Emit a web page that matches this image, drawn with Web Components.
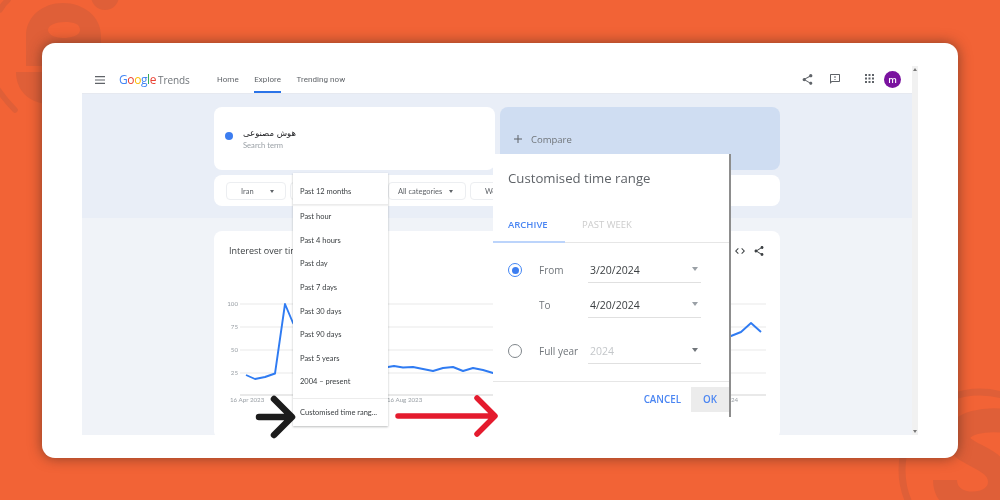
<!DOCTYPE html>
<html lang="en">
<head>
<meta charset="utf-8">
<title>Google Trends custom time range</title>
<style>
  html, body { margin: 0; background: #f26336; }
  body { font-family: "Open Sans", Roboto, sans-serif; }
</style>
</head>
<body>
<trends-shot>
  <trends-header slot="screen"></trends-header>
  <search-band slot="screen"></search-band>
  <chart-card slot="screen"></chart-card>
  <time-menu slot="over">
    <menu-item>Past hour</menu-item>
    <menu-item>Past 4 hours</menu-item>
    <menu-item>Past day</menu-item>
    <menu-item>Past 7 days</menu-item>
    <menu-item>Past 30 days</menu-item>
    <menu-item>Past 90 days</menu-item>
    <menu-item>Past 5 years</menu-item>
    <menu-item>2004 – present</menu-item>
  </time-menu>
  <range-dialog slot="over"></range-dialog>
</trends-shot>

<script>
// small helper so every element is written the same way
function shadow(el, html) {
  el.attachShadow({ mode: 'open' }).innerHTML = html;
}

const SHARE = 'M18 16.08c-.76 0-1.44.3-1.96.77L8.91 12.7c.05-.23.09-.46.09-.7s-.04-.47-.09-.7l7.05-4.11c.54.5 1.25.81 2.04.81 1.66 0 3-1.34 3-3s-1.34-3-3-3-3 1.34-3 3c0 .24.04.47.09.7L8.04 9.81C7.5 9.31 6.79 9 6 9c-1.66 0-3 1.34-3 3s1.34 3 3 3c.79 0 1.5-.31 2.04-.81l7.12 4.16c-.05.21-.08.43-.08.65 0 1.61 1.31 2.92 2.92 2.92 1.61 0 2.92-1.31 2.92-2.92s-1.31-2.92-2.92-2.92z';

class TrendsShot extends HTMLElement {
  constructor() {
    super();
    shadow(this, `
      <style>
        :host { display: block; position: relative; width: 1000px; height: 500px; overflow: hidden; background: #f26336; filter: blur(.3px); }
        .marks { position: absolute; left: 0; top: 0; }
        .frame { position: relative; box-sizing: border-box; width: 916px; height: 415px; margin: 43px 42px 0;
                 padding: 23px 40px 0; background: #fff; border-radius: 13px; box-shadow: 0 0 13px rgba(66,40,30,.62); }
        .screen { display: grid; grid-template-columns: 830px 6px; height: 369px; overflow: hidden; }
        .page { display: flex; flex-direction: column; height: 369px; overflow: hidden; background: #f0f3f8; }
        .bar { background: #f1f1f1; display: flex; flex-direction: column; justify-content: space-between; align-items: center; padding: 2px 0; box-sizing: border-box; }
        .bar i { width: 0; height: 0; border: 2px solid transparent; }
        .bar i:first-child { border-bottom: 3px solid #777; border-top: 0; }
        .bar i:last-child { border-top: 3px solid #777; border-bottom: 0; }
        .arrows { position: absolute; left: 0; top: 0; z-index: 5; pointer-events: none; }
      </style>
      <svg class="marks" width="1000" height="500" viewBox="0 0 1000 500" fill="#df5f38">
        <path fill-rule="evenodd" d="M26 36c0-20 17-33 37-33s38 13 38 33v30H26zM48 30c0 5 8 8 15 8s17-2 17-8-6-8-15-8-17 3-17 8z"/>
        <path d="M16 72h30v32C28 102 16 90 16 72z"/>
        <circle cx="105" cy="-4" r="14"/>
        <path d="M-3 88Q5 100 15 110M0 10Q3 4 8 0" fill="none" stroke="#df5f38" stroke-width="5.5" stroke-linecap="round"/>
        <circle cx="980" cy="470" r="78" fill="none" stroke="#df5f38" stroke-width="7"/>
        <path d="M1012 422C985 417 958 423 958 438 958 456 1000 456 1000 482 1000 510 945 512 945 480" fill="none" stroke="#df5f38" stroke-width="24"/>
      </svg>
      <div class="frame">
        <div class="screen">
          <div class="page"><slot name="screen"></slot></div>
          <div class="bar"><i></i><i></i></div>
        </div>
      </div>
      <slot name="over"></slot>
      <svg class="arrows" width="1000" height="500" viewBox="0 0 1000 500" fill="none" stroke-linecap="round" stroke-linejoin="round">
        <path d="M259 417H291M274 399L292 417 274 435" stroke="#1c1c1c" stroke-width="6.5"/>
        <path d="M398 416H494M477 398L495 416 477 434" stroke="#e41b2e" stroke-width="5.5"/>
      </svg>`);
  }
}

class TrendsHeader extends HTMLElement {
  constructor() {
    super();
    shadow(this, `
      <style>
        :host { display: flex; align-items: center; flex: none; height: 28px; padding-left: 13px; background: #fff; color: #5f6368;
                font: 8px Roboto, sans-serif; border-bottom: 1px solid #e6e9f0; box-sizing: border-box; }
        svg { display: block; flex: none; }
        .logo { display: flex; align-items: baseline; gap: 2px; margin-left: 14px; width: 84px; font: 500 12px "Open Sans", sans-serif; letter-spacing: -.4px; }
        .logo b { font-weight: 500; }
        .logo .name { font-size: 10px; font-weight: 400; letter-spacing: -.1px; color: #70757a; }
        nav { display: flex; height: 100%; gap: 15.5px; margin-left: 14px; }
        nav a { display: flex; align-items: center; color: #5f6368; letter-spacing: .05px; position: relative; }
        nav a.on::after { content: ""; position: absolute; left: 0; right: 0; bottom: 0; height: 2px; background: #2a73e8; }
        .right { display: flex; align-items: center; margin-left: auto; margin-right: 11px; }
        .avatar { width: 17px; height: 17px; border-radius: 50%; background: #7a139f; color: #fff; font: 600 9px "Open Sans", sans-serif;
                  display: flex; align-items: center; justify-content: center; margin-left: 10.5px; }
      </style>
      <svg width="10" height="8" viewBox="0 0 10 8" fill="#5f6368"><path d="M0 0h10v1.2H0zM0 3.4h10v1.2H0zM0 6.8h10V8H0z"/></svg>
      <div class="logo"><span><b style="color:#4285f4">G</b><b style="color:#ea4335">o</b><b style="color:#fbbc05">o</b><b style="color:#4285f4">g</b><b style="color:#34a853">l</b><b style="color:#ea4335">e</b></span><span class="name">Trends</span></div>
      <nav><a>Home</a><a class="on">Explore</a><a>Trending now</a></nav>
      <div class="right">
        <svg width="13" height="13" viewBox="0 0 24 24" fill="#5f6368"><path d="${SHARE}"/></svg>
        <svg style="margin-left:15px;margin-top:-2px" width="12" height="12" viewBox="0 0 24 24" fill="#5f6368"><path d="M20 2H4c-1.1 0-1.99.9-1.99 2L2 22l4-4h14c1.1 0 2-.9 2-2V4c0-1.1-.9-2-2-2zm0 14H5.17L4 17.17V4h16v12zM11 12h2v2h-2zm0-6h2v4h-2z"/></svg>
        <svg style="margin-left:24px;margin-top:-2px" width="9" height="9" viewBox="0 0 9 9" fill="#5f6368"><path d="M0 0h2v2H0zM3.5 0h2v2h-2zM7 0h2v2H7zM0 3.5h2v2H0zM3.5 3.5h2v2h-2zM7 3.5h2v2H7zM0 7h2v2H0zM3.5 7h2v2h-2zM7 7h2v2H7z"/></svg>
        <div class="avatar">m</div>
      </div>`);
  }
}

class FilterChip extends HTMLElement {
  constructor() {
    super();
    shadow(this, `
      <style>
        :host { display: flex; align-items: center; box-sizing: border-box; height: 18px; flex: none;
                border: 1px solid #eceef1; border-radius: 4px; color: #5f6368; font: 7.5px Lato, sans-serif; background: #fff; }
        i { width: 0; height: 0; border: 2.6px solid transparent; border-top: 3px solid #5f6368; border-bottom: 0; }
      </style>
      <slot></slot><i></i>`);
    this.style.width = this.getAttribute('w') + 'px';
    this.style.paddingLeft = this.getAttribute('pad') + 'px';
    this.style.gap = (this.getAttribute('gap') || 14) + 'px';
  }
}

class SearchBand extends HTMLElement {
  constructor() {
    super();
    shadow(this, `
      <style>
        :host { display: block; flex: none; height: 124px; box-sizing: border-box; padding: 13px 132px 12px 132px; background: #e9eef7; }
        .top { display: grid; grid-template-columns: 281px 280px; gap: 5px; height: 63px; }
        .term, .compare { border-radius: 8px; display: flex; align-items: center; box-sizing: border-box; }
        .term { background: #fff; padding-left: 11px; gap: 10px; }
        .dot { width: 8px; height: 8px; border-radius: 50%; background: #3c7df0; flex: none; margin-top: -6px; }
        .word { font: 8.5px "DejaVu Sans", "Noto Sans", sans-serif; color: #202124; line-height: 12px; }
        .sub { font: 7.6px Lato, sans-serif; color: #9aa0a6; line-height: 11px; margin-top: 1px; }
        .compare { background: #cfddf2; align-items: flex-end; padding: 0 0 24px 14px; gap: 9px; color: #70757a; font: 9.5px "Open Sans", sans-serif; }
        .filters { display: flex; align-items: center; gap: 4px; margin-top: 5px; height: 31px; padding: 1px 0 0 12px; box-sizing: border-box; background: #fff; border-radius: 8px; }
      </style>
      <div class="top">
        <div class="term"><span class="dot"></span><div><div class="word" dir="rtl" style="text-align:left">هوش مصنوعی</div><div class="sub">Search term</div></div></div>
        <div class="compare"><svg width="8" height="8" viewBox="0 0 8 8" fill="#5f6368" style="margin-bottom:3px"><path d="M3.5 0h1v3.5H8v1H4.5V8h-1V4.5H0v-1h3.5z"/></svg><span>Compare</span></div>
      </div>
      <div class="filters">
        <filter-chip w="60" pad="14" gap="16">Iran</filter-chip>
        <filter-chip w="94" pad="9"></filter-chip>
        <filter-chip w="78" pad="9" gap="7">All categories</filter-chip>
        <filter-chip w="84" pad="14">We</filter-chip>
      </div>`);
  }
}

class ChartCard extends HTMLElement {
  constructor() {
    super();
    shadow(this, `
      <style>
        :host { display: block; flex: none; height: 208px; margin: 13px 132px 0; background: #fff; border-radius: 8px; }
        .head { display: flex; align-items: center; height: 39px; margin-bottom: 1px; padding: 0 15px; box-sizing: border-box; color: #3c4043; font: 9px "Open Sans", sans-serif; }
        .head svg { display: block; }
        .tools { display: flex; gap: 7px; margin-left: auto; }
        .plot { display: block; }
        text { font: 6.2px Lato, sans-serif; fill: #9aa0a6; }
      </style>
      <div class="head"><span>Interest over time</span>
        <div class="tools">
          <svg width="12" height="12" viewBox="0 0 24 24" fill="#3c4043"><path d="M9.4 16.6 4.8 12l4.6-4.6L8 6l-6 6 6 6 1.4-1.4zm5.2 0 4.6-4.6-4.6-4.6L16 6l6 6-6 6-1.4-1.4z"/></svg>
          <svg width="12" height="12" viewBox="0 0 24 24" fill="#3c4043"><path d="${SHARE}"/></svg>
        </div>
      </div>
      <svg class="plot" width="566" height="164" viewBox="214 271 566 164">
        <g stroke="#f1f1f1" stroke-width="1.5">
          <path d="M240 304H766M240 327H766M240 350H766M240 373H766"/>
          <path d="M240 395H766" stroke="#e2e2e2"/>
        </g>
        <text x="238" y="306" text-anchor="end">100</text>
        <text x="238" y="329" text-anchor="end">75</text>
        <text x="238" y="352" text-anchor="end">50</text>
        <text x="238" y="375" text-anchor="end">25</text>
        <text x="230" y="402">16 Apr 2023</text>
        <text x="387" y="402">16 Aug 2023</text>
        <text x="731" y="402">24</text>
        <path fill="none" stroke="#2f7bf2" stroke-width="1.9" stroke-linejoin="round"
              d="M246 375 255 379 265 377 275 373.5 285 304 293 323 320 360 388 367 394 366 403 367.5 413 367 433 371 443 368 453 367 463 371 473 368 483 370 493 373 600 350 731 336 741 332 751 323 761 332"/>
      </svg>`);
  }
}

class MenuItem extends HTMLElement {
  constructor() {
    super();
    shadow(this, `
      <style>
        :host { display: flex; align-items: center; height: 23.6px; padding-left: 7px; color: #3c4043; font: 7.5px Lato, sans-serif; }
      </style>
      <slot></slot>`);
  }
}

class TimeMenu extends HTMLElement {
  constructor() {
    super();
    shadow(this, `
      <style>
        :host { display: block; position: absolute; left: 293px; top: 173px; width: 95px; background: #fff; z-index: 3;
                box-shadow: 0 1px 2px rgba(60,64,67,.35); }
        .first { height: 32px; border-bottom: 1.5px solid #ececec; box-shadow: 0 1px 1px rgba(0,0,0,.05); display: flex; align-items: center; padding-left: 7px; padding-top: 5px; box-sizing: border-box;
                 color: #3c4043; font: 7.5px Lato, sans-serif; }
        .list { padding-bottom: 4px; border-bottom: 1.5px solid #ececec; }
        .last { height: 27px; display: flex; align-items: center; padding-left: 7px; color: #3c4043; font: 7.5px Lato, sans-serif; }
      </style>
      <div class="first">Past 12 months</div>
      <div class="list"><slot></slot></div>
      <div class="last">Customised time rang...</div>`);
  }
}

class RangeField extends HTMLElement {
  constructor() {
    super();
    const off = this.hasAttribute('off');
    shadow(this, `
      <style>
        :host { display: grid; grid-template-columns: 31px 49px 113px; height: 25px; padding-left: 15px; color: #70757a; font: 10px "Open Sans", Roboto, sans-serif; }
        .mark { display: flex; align-items: center; height: 24px; }
        .radio { width: 14px; height: 14px; box-sizing: border-box; border-radius: 50%; border: 1.2px solid ${off ? '#80868b' : '#4285f4'};
                 display: flex; align-items: center; justify-content: center; }
        .radio i { width: 7px; height: 7px; border-radius: 50%; background: #3c7df0; }
        .label { align-self: center; margin-top: -2px; }
        .value { display: flex; align-items: center; justify-content: space-between; box-sizing: border-box; border-bottom: 1.2px solid #e0e0e0; padding: 0 3px 0 2px;
                 font: 10.5px "Open Sans", sans-serif; color: ${off ? '#c4c7ca' : '#3c4043'}; }
        .arrow { width: 0; height: 0; border: 3.5px solid transparent; border-top: 4px solid ${off ? '#70757a' : '#9aa0a6'}; border-bottom: 0; margin-top: -3px; }
      </style>
      <span class="mark">${this.getAttribute('radio') === 'on' ? '<div class="radio"><i></i></div>' : this.getAttribute('radio') === 'off' ? '<div class="radio"></div>' : ''}</span>
      <span class="label"><slot name="label"></slot></span>
      <div class="value"><slot name="value"></slot><i class="arrow"></i></div>`);
  }
}

class RangeDialog extends HTMLElement {
  constructor() {
    super();
    shadow(this, `
      <style>
        :host { display: block; position: absolute; left: 493px; top: 154px; width: 238px; height: 263px; box-sizing: border-box; background: #fff;
                border-right: 2px solid #8d8d8d; z-index: 4; }
        h2 { margin: 0; height: 48px; display: flex; align-items: center; padding-left: 15px; box-sizing: border-box; font: 400 13.2px "Open Sans", sans-serif; color: #5f6368; }
        .tabs { display: flex; height: 41px; box-sizing: border-box; padding-top: 5px; border-bottom: 1px solid #e6e6e6; font: 600 9.5px "Open Sans", sans-serif; }
        .tab { display: flex; align-items: center; box-sizing: border-box; padding: 0 0 0 15px; color: #ccc; }
        .tab.on { width: 72px; color: #4b86f2; border-bottom: 2px solid #bcd4fb; height: 36px; }
        .tab.off { margin-left: 2px; font-weight: 400; }
        .rows { padding: 15px 0 17px; display: flex; flex-direction: column; border-bottom: 1px solid #e6e6e6; }
        .rows .gap { margin-top: 10px; }
        .rows .gap2 { margin-top: 21px; }
        .foot { display: flex; justify-content: flex-end; align-items: center; gap: 10px; padding-top: 5px; font: 600 9.8px "Open Sans", sans-serif; color: #4b86f2; }
        .ok { width: 38px; height: 25px; background: #ececec; display: flex; align-items: center; justify-content: center; }
      </style>
      <h2>Customised time range</h2>
      <div class="tabs"><div class="tab on">ARCHIVE</div><div class="tab off">PAST WEEK</div></div>
      <div class="rows">
        <range-field radio="on"><span slot="label">From</span><span slot="value">3/20/2024</span></range-field>
        <range-field class="gap"><span slot="label">To</span><span slot="value">4/20/2024</span></range-field>
        <range-field class="gap2" radio="off" off><span slot="label">Full year</span><span slot="value">2024</span></range-field>
      </div>
      <div class="foot"><span>CANCEL</span><div class="ok">OK</div></div>`);
  }
}

customElements.define('trends-shot', TrendsShot);
customElements.define('trends-header', TrendsHeader);
customElements.define('filter-chip', FilterChip);
customElements.define('search-band', SearchBand);
customElements.define('chart-card', ChartCard);
customElements.define('menu-item', MenuItem);
customElements.define('time-menu', TimeMenu);
customElements.define('range-field', RangeField);
customElements.define('range-dialog', RangeDialog);
</script>
</body>
</html>
